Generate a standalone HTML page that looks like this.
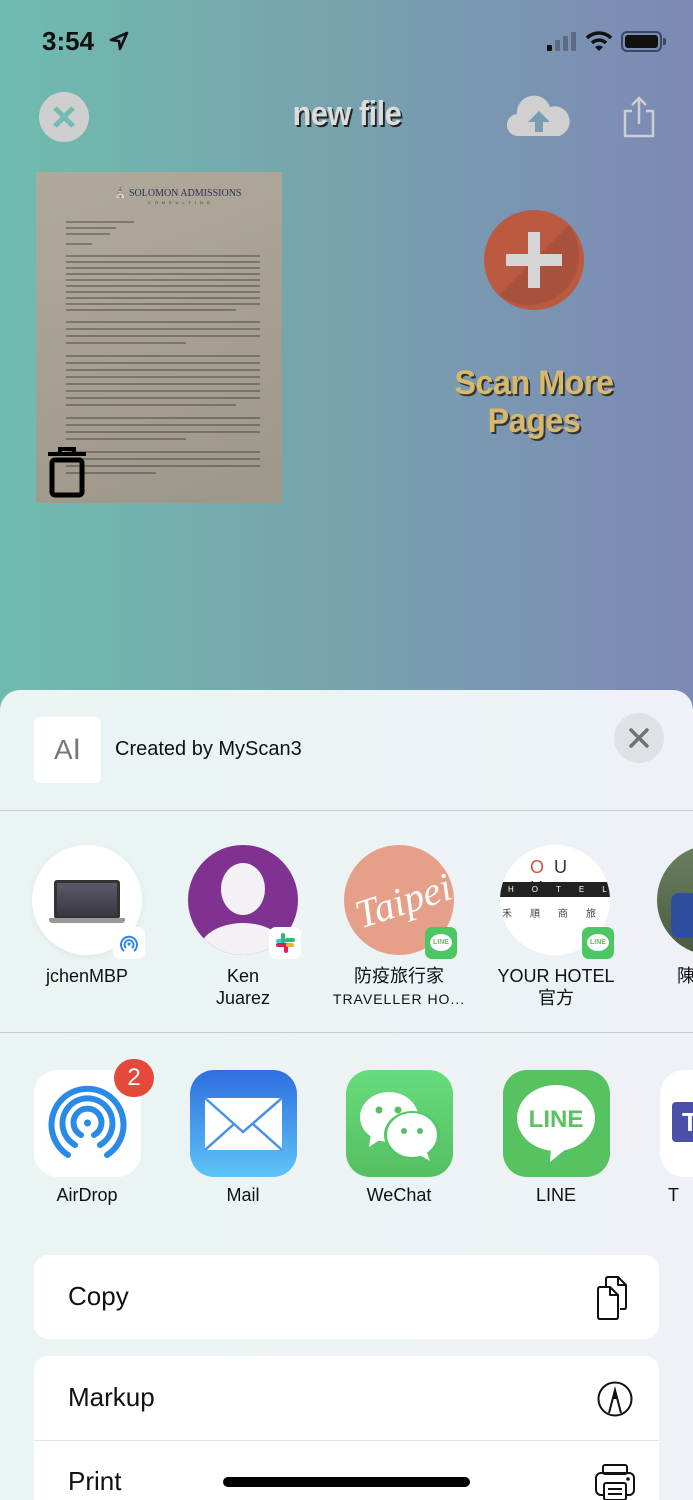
<!DOCTYPE html>
<html><head><meta charset="utf-8"><style>
*{margin:0;padding:0;box-sizing:border-box}
html,body{width:693px;height:1500px;overflow:hidden}
body{position:relative;font-family:"Liberation Sans","Noto Sans CJK TC",sans-serif;background:linear-gradient(90deg,#6fbcaf 0%,#77a4ad 45%,#7d89b6 100%)}
.abs{position:absolute}
.sheet{position:absolute;left:0;top:690px;width:693px;height:810px;border-radius:20px 20px 0 0;background:linear-gradient(90deg,#eaf5f3,#eef1f6)}
.pname{position:absolute;width:150px;text-align:center;font-size:18px;color:#111;line-height:22px}
.circ{position:absolute;width:110px;height:110px;border-radius:55px;overflow:hidden}
.badge{position:absolute;width:32px;height:32px;border-radius:7px}
.app{position:absolute;top:1070px;width:107px;height:107px;border-radius:24px;overflow:hidden}
.alabel{position:absolute;top:1185px;width:140px;text-align:center;font-size:18px;color:#111}
.card{position:absolute;left:34px;width:625px;background:#fff;border-radius:14px}
.ctext{position:absolute;left:68px;font-size:26px;color:#111}
</style></head><body>
<div class="abs" style="left:42px;top:26px;font-size:26px;font-weight:bold;color:#111">3:54</div>
<svg class="abs" style="left:108px;top:30px" width="22" height="22" viewBox="0 0 22 22"><path d="M19 3 L3 10 L11 11 L12 19 Z" fill="none" stroke="#111" stroke-width="2.6" stroke-linejoin="round"/></svg>
<div class="abs" style="left:547px;top:45px;width:5px;height:6px;background:#111;border-radius:1px"></div>
<div class="abs" style="left:555px;top:40px;width:5px;height:11px;background:#5c6a85;border-radius:1px"></div>
<div class="abs" style="left:563px;top:36px;width:5px;height:15px;background:#5c6a85;border-radius:1px"></div>
<div class="abs" style="left:571px;top:32px;width:5px;height:19px;background:#5c6a85;border-radius:1px"></div>
<svg class="abs" style="left:585px;top:30px" width="28" height="22" viewBox="0 0 28 22"><path d="M2 8 A17 17 0 0 1 26 8" fill="none" stroke="#111" stroke-width="3.5"/><path d="M7 13 A10 10 0 0 1 21 13" fill="none" stroke="#111" stroke-width="3.5"/><path d="M14 21 L10 17 A6 6 0 0 1 18 17 Z" fill="#111"/></svg>
<div class="abs" style="left:621px;top:31px;width:41px;height:21px;border:2px solid #3b4663;border-radius:6px;padding:2px"><div style="width:100%;height:100%;background:#111;border-radius:3px"></div></div>
<div class="abs" style="left:663px;top:38px;width:3px;height:7px;background:#3b4663;border-radius:0 2px 2px 0"></div>

<div class="abs" style="left:39px;top:92px;width:50px;height:50px;border-radius:25px;background:#cfcfcf"></div>
<svg class="abs" style="left:39px;top:92px" width="50" height="50"><path d="M16 16 L34 34 M34 16 L16 34" stroke="#72bbb0" stroke-width="5"/></svg>
<div class="abs" style="left:227px;top:95px;width:240px;text-align:center;font-size:34px;font-weight:bold;color:#dcdcdc;letter-spacing:-0.5px;transform:scaleX(0.9);text-shadow:2px 2px 0 #222">new file</div>
<svg class="abs" style="left:507px;top:94px" width="64" height="44" viewBox="0 0 64 44"><path d="M12 42 A11 11 0 0 1 10 20 A17 17 0 0 1 43 13 A14 14 0 0 1 52 42 Z" fill="#d0d0d0"/><path d="M32 17 L21 28 L28 28 L28 38 L36 38 L36 28 L43 28 Z" fill="#7a9cb0"/></svg>
<svg class="abs" style="left:620px;top:94px" width="38" height="46" viewBox="0 0 38 46"><path d="M12 17 H5 V42 H33 V17 H26" fill="none" stroke="#cfcfcf" stroke-width="2.5" stroke-linejoin="round"/><path d="M19 30 V4 M12 11 L19 4 L26 11" fill="none" stroke="#cfcfcf" stroke-width="2.5"/></svg>

<div class="abs" style="left:36px;top:172px;width:246px;height:331px;background:linear-gradient(160deg,#b1aa9c,#a59e90 60%,#9d978a);overflow:hidden">
<div style="position:absolute;left:78px;top:16px;font-family:'Liberation Serif',serif;font-size:10px;color:#2a3050">⛪ SOLOMON ADMISSIONS</div>
<div style="position:absolute;left:112px;top:28px;font-size:4px;letter-spacing:4px;color:#333">CONSULTING</div>
<svg width="246" height="331" style="position:absolute;left:0;top:0">
<g stroke="#3a3733" stroke-width="1.6" opacity=".55">
<path d="M30 50H98M30 56H80M30 62H74M30 72H56"/>
<path d="M30 84H224M30 90H224M30 96H224M30 102H224M30 108H224M30 114H224M30 120H224M30 126H224M30 132H224M30 138H200"/>
<path d="M30 150H224M30 157H224M30 164H224M30 171H150"/>
<path d="M30 184H224M30 191H224M30 198H224M30 205H224M30 212H224M30 219H224M30 226H224M30 233H200"/>
<path d="M30 246H224M30 253H224M30 260H224M30 267H150"/>
<path d="M30 280H224M30 287H224M30 294H224M30 301H120"/>
</g></svg>
<svg style="position:absolute;left:10px;top:274px" width="42" height="52" viewBox="0 0 42 52"><path d="M2 8 H40 M14 8 V3 H28 V8" fill="none" stroke="#000" stroke-width="4"/><rect x="6" y="14" width="30" height="35" rx="3" fill="none" stroke="#000" stroke-width="5"/></svg>
</div>

<svg class="abs" style="left:482px;top:208px" width="104" height="104"><circle cx="52" cy="52" r="50" fill="#bb5a40"/><path d="M87 17 A50 50 0 0 1 17 87 Z" fill="#a8513d"/><path d="M46 24h12v22h22v12h-22v22h-12v-22h-22v-12h22z" fill="#d6d6d6"/></svg>
<div class="abs" style="left:404px;top:364px;width:260px;text-align:center;font-size:34px;line-height:38px;font-weight:bold;color:#d8b86a;letter-spacing:-0.5px;transform:scaleX(0.95);text-shadow:2px 2px 0 #333">Scan More<br>Pages</div>

<div class="sheet"></div>
<div class="abs" style="left:34px;top:717px;width:67px;height:66px;background:#fff;border-radius:6px;font-size:28px;color:#777;text-align:center;line-height:66px">A<span style="font-size:30px">I</span></div>
<div class="abs" style="left:115px;top:738px;font-size:20px;color:#111">Created by MyScan3</div>
<div class="abs" style="left:614px;top:713px;width:50px;height:50px;border-radius:25px;background:#dfe1e4"></div>
<svg class="abs" style="left:614px;top:713px" width="50" height="50"><path d="M17 17 L33 33 M33 17 L17 33" stroke="#707174" stroke-width="3.5" stroke-linecap="round"/></svg>
<div class="abs" style="left:0;top:810px;width:693px;height:1px;background:#c9cccf"></div>

<div class="circ" style="left:32px;top:845px;background:#fff;box-shadow:0 2px 8px rgba(0,0,0,.06)"><div style="position:absolute;left:22px;top:35px;width:66px;height:39px;background:linear-gradient(#5a5a6a,#3b3540);border:3px solid #333;border-radius:3px"></div><div style="position:absolute;left:17px;top:73px;width:76px;height:5px;background:#999;border-radius:0 0 3px 3px"></div></div>
<div class="badge" style="left:113px;top:927px;background:#fff"><svg width="32" height="32"><g fill="none" stroke="#2f86ee" stroke-width="2"><path d="M11 24 A8 8 0 1 1 21 24"/><path d="M13 21 A4.5 4.5 0 1 1 19 21"/></g><circle cx="16" cy="17" r="1.6" fill="#2f86ee"/></svg></div>
<div class="pname" style="left:12px;top:965px">jchenMBP</div>

<div class="circ" style="left:188px;top:845px;background:#7f3291"><div style="position:absolute;left:33px;top:18px;width:44px;height:52px;border-radius:50%;background:#f3f1f5"></div><div style="position:absolute;left:10px;top:78px;width:90px;height:60px;border-radius:50%;background:#f3f1f5"></div></div>
<div class="badge" style="left:269px;top:927px;background:#fff"><svg width="32" height="32"><g stroke-width="4" stroke-linecap="round"><path d="M9 14h6" stroke="#36c5f0"/><path d="M14 8v6" stroke="#2eb67d"/><path d="M17 18v6" stroke="#e01e5a"/><path d="M18 13h6" stroke="#2eb67d"/><path d="M9 18h6" stroke="#e01e5a"/><path d="M19 18h4" stroke="#ecb22e"/></g></svg></div>
<div class="pname" style="left:168px;top:965px">Ken<br>Juarez</div>

<div class="circ" style="left:344px;top:845px;background:#e6a08a"><div style="position:absolute;left:10px;top:32px;font-family:'Liberation Serif',serif;font-style:italic;font-size:40px;color:#fff;transform:rotate(-18deg)">Taipei</div></div>
<div class="badge" style="left:425px;top:927px;background:#4cc764"><div style="position:absolute;left:5px;top:7px;width:22px;height:17px;border-radius:50%;background:#fff;font-size:7px;font-weight:bold;color:#4cc764;text-align:center;line-height:17px">LINE</div></div>
<div class="pname" style="left:324px;top:965px">防疫旅行家<br><span style="font-size:14px;letter-spacing:1px">TRAVELLER HO...</span></div>

<div class="circ" style="left:500px;top:845px;background:#fff"><div style="position:absolute;left:30px;top:12px;font-size:18px;color:#333;letter-spacing:10px"><span style="color:#c54">O</span>U H</div><div style="position:absolute;left:0;top:37px;width:110px;height:15px;background:#222;color:#fff;font-size:8px;letter-spacing:18px;line-height:15px;padding-left:8px">HOTEL</div><div style="position:absolute;left:0;top:60px;font-size:10px;color:#444;letter-spacing:18px;padding-left:2px;white-space:nowrap">禾順商旅</div></div>
<div class="badge" style="left:582px;top:927px;background:#4cc764"><div style="position:absolute;left:5px;top:7px;width:22px;height:17px;border-radius:50%;background:#fff;font-size:7px;font-weight:bold;color:#4cc764;text-align:center;line-height:17px">LINE</div></div>
<div class="pname" style="left:481px;top:965px">YOUR HOTEL<br>官方</div>

<div class="circ" style="left:657px;top:845px;background:linear-gradient(#6b8060,#4a5a40)"><div style="position:absolute;left:14px;top:48px;width:28px;height:45px;background:#2d4fa0;border-radius:8px"></div></div>
<div class="pname" style="left:637px;top:965px;text-align:left;padding-left:40px">陳</div>

<div class="abs" style="left:0;top:1032px;width:693px;height:1px;background:#c9cccf"></div>

<div class="app" style="left:34px;background:#fff"><svg width="107" height="107"><g fill="none" stroke="#2a8ae8" stroke-width="6" stroke-linecap="round"><path d="M34 85 A36 36 0 1 1 73 85"/><path d="M41 75 A25 25 0 1 1 66 75"/><path d="M47 65 A14 14 0 1 1 60 65"/></g><circle cx="53.5" cy="53" r="3.5" fill="#2a8ae8"/></svg></div>
<div class="abs" style="left:114px;top:1059px;width:40px;height:38px;border-radius:20px;background:#e5493a;color:#fff;font-size:24px;text-align:center;line-height:38px">2</div>
<div class="alabel" style="left:17px">AirDrop</div>
<div class="app" style="left:190px;background:linear-gradient(#2f6ee0,#5ec4f7)"><svg width="107" height="107"><rect x="15" y="28" width="77" height="52" fill="#fff"/><path d="M15 28 L53 62 L92 28 M15 80 L44 54 M92 80 L63 54" fill="none" stroke="#4a90e8" stroke-width="2.5"/></svg></div>
<div class="alabel" style="left:173px">Mail</div>
<div class="app" style="left:346px;background:linear-gradient(#67dc7c,#55bf62)"><svg width="107" height="107"><ellipse cx="43" cy="47" rx="29" ry="25" fill="#fff"/><path d="M25 64 L23 77 L35 69 Z" fill="#fff"/><ellipse cx="66" cy="65" rx="28" ry="24" fill="#55c664"/><ellipse cx="66" cy="65" rx="25" ry="22" fill="#fff"/><path d="M80 80 L84 91 L72 84 Z" fill="#fff"/><circle cx="33" cy="40" r="3.5" fill="#55bf62"/><circle cx="52" cy="40" r="3.5" fill="#55bf62"/><circle cx="58" cy="61" r="3" fill="#55bf62"/><circle cx="74" cy="61" r="3" fill="#55bf62"/></svg></div>
<div class="alabel" style="left:329px">WeChat</div>
<div class="app" style="left:503px;background:#56c260"><svg width="107" height="107"><ellipse cx="53" cy="48" rx="39" ry="33" fill="#fff"/><path d="M48 78 L47 92 L63 79 Z" fill="#fff"/><text x="53" y="57" text-anchor="middle" font-family="Liberation Sans" font-weight="bold" font-size="24" fill="#56c260">LINE</text></svg></div>
<div class="alabel" style="left:486px">LINE</div>
<div class="app" style="left:660px;background:#fff"><div style="position:absolute;left:12px;top:32px;width:40px;height:40px;background:#4b4fa8;border-radius:4px;color:#fff;font-weight:bold;font-size:26px;padding-left:10px;line-height:40px">T</div></div>
<div class="alabel" style="left:643px;text-align:left;padding-left:25px">T</div>

<div class="card" style="top:1255px;height:84px"></div>
<div class="ctext" style="top:1281px">Copy</div>
<svg class="abs" style="left:594px;top:1275px" width="40" height="46" viewBox="0 0 40 46"><g fill="none" stroke="#111" stroke-width="2" stroke-linejoin="round"><path d="M12 13 V4 Q12 2 14 2 H24 L32 10 V32 Q32 34 30 34 H26"/><path d="M24 2 V10 H32"/><path d="M4 14 Q4 12 6 12 H16 L24 20 V42 Q24 44 22 44 H6 Q4 44 4 42 Z"/><path d="M16 12 V20 H24"/></g></svg>
<div class="card" style="top:1356px;height:144px;border-radius:14px 14px 0 0"></div>
<div class="ctext" style="top:1382px">Markup</div>
<svg class="abs" style="left:596px;top:1380px" width="38" height="38"><circle cx="19" cy="19" r="16.5" fill="none" stroke="#111" stroke-width="2"/><path d="M13 33 L19 10 L25 33" fill="none" stroke="#111" stroke-width="2"/><path d="M16.5 19 L19 10 L21.5 19 Z" fill="#111"/></svg>
<div class="abs" style="left:34px;top:1440px;width:625px;height:1px;background:#e2e3e5"></div>
<div class="ctext" style="top:1466px">Print</div>
<svg class="abs" style="left:594px;top:1463px" width="42" height="37"><g fill="none" stroke="#111" stroke-width="2"><rect x="9" y="2" width="24" height="9" rx="2"/><rect x="2" y="10" width="38" height="22" rx="5"/><rect x="10" y="20" width="22" height="17" rx="2" fill="#fff"/><path d="M14 26H28M14 31H28"/></g><circle cx="34" cy="16" r="1.8" fill="#111"/></svg>
<div class="abs" style="left:223px;top:1477px;width:247px;height:10px;border-radius:5px;background:#000"></div>
</body></html>
